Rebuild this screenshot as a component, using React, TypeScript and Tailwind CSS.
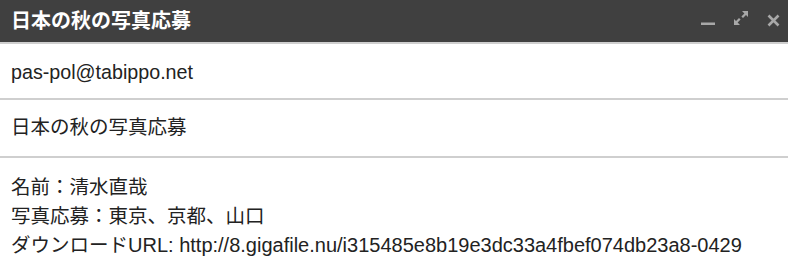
export default function App() {
  const font = { fontFamily: '"Liberation Sans", "Noto Sans CJK JP", sans-serif' }

  return (
    <div className="w-[788px] h-[280px] bg-white overflow-hidden" style={font}>
      <div className="h-[42px] bg-[#404040] flex items-center justify-between pl-[11px] pr-[8px]">
        <span className="text-white text-[20px] font-bold">日本の秋の写真応募</span>
        <div className="flex items-center gap-[18px] text-[#a8a8a8]">
          <svg width="14" height="14" viewBox="0 0 14 14">
            <rect x="0" y="8.5" width="14" height="2.5" fill="currentColor" />
          </svg>
          <svg width="16" height="16" viewBox="0 0 16 16" className="mb-[6px]">
            <path d="M9 1h6v6l-2-2-3 3-1.6-1.6 3-3z M7 15H1V9l2 2 3-3 1.6 1.6-3 3z" fill="currentColor" />
          </svg>
          <svg width="13" height="13" viewBox="0 0 13 13" className="mb-[2px]">
            <path d="M1.5 1.5l10 10M11.5 1.5l-10 10" stroke="currentColor" strokeWidth="2.6" />
          </svg>
        </div>
      </div>
      <div className="h-[2px] bg-[#cfcfcf]" />
      <div className="h-[54px] flex items-center px-[11px] pt-[4px] text-[19.7px] text-[#222]">
        pas-pol@tabippo.net
      </div>
      <div className="h-[2px] bg-[#cfcfcf]" />
      <div className="h-[56px] flex items-center px-[11px] text-[19.5px] text-[#222]">
        日本の秋の写真応募
      </div>
      <div className="h-[2px] bg-[#cfcfcf]" />
      <div className="px-[11px] pt-[15px] text-[19.5px] leading-[29px] text-[#222]">
        <div>名前：清水直哉</div>
        <div>写真応募：東京、京都、山口</div>
        <div>
          ダウンロード
          <span className="text-[20px]">URL: http://8.gigafile.nu/i315485e8b19e3dc33a4fbef074db23a8-0429</span>
        </div>
      </div>
    </div>
  )
}
